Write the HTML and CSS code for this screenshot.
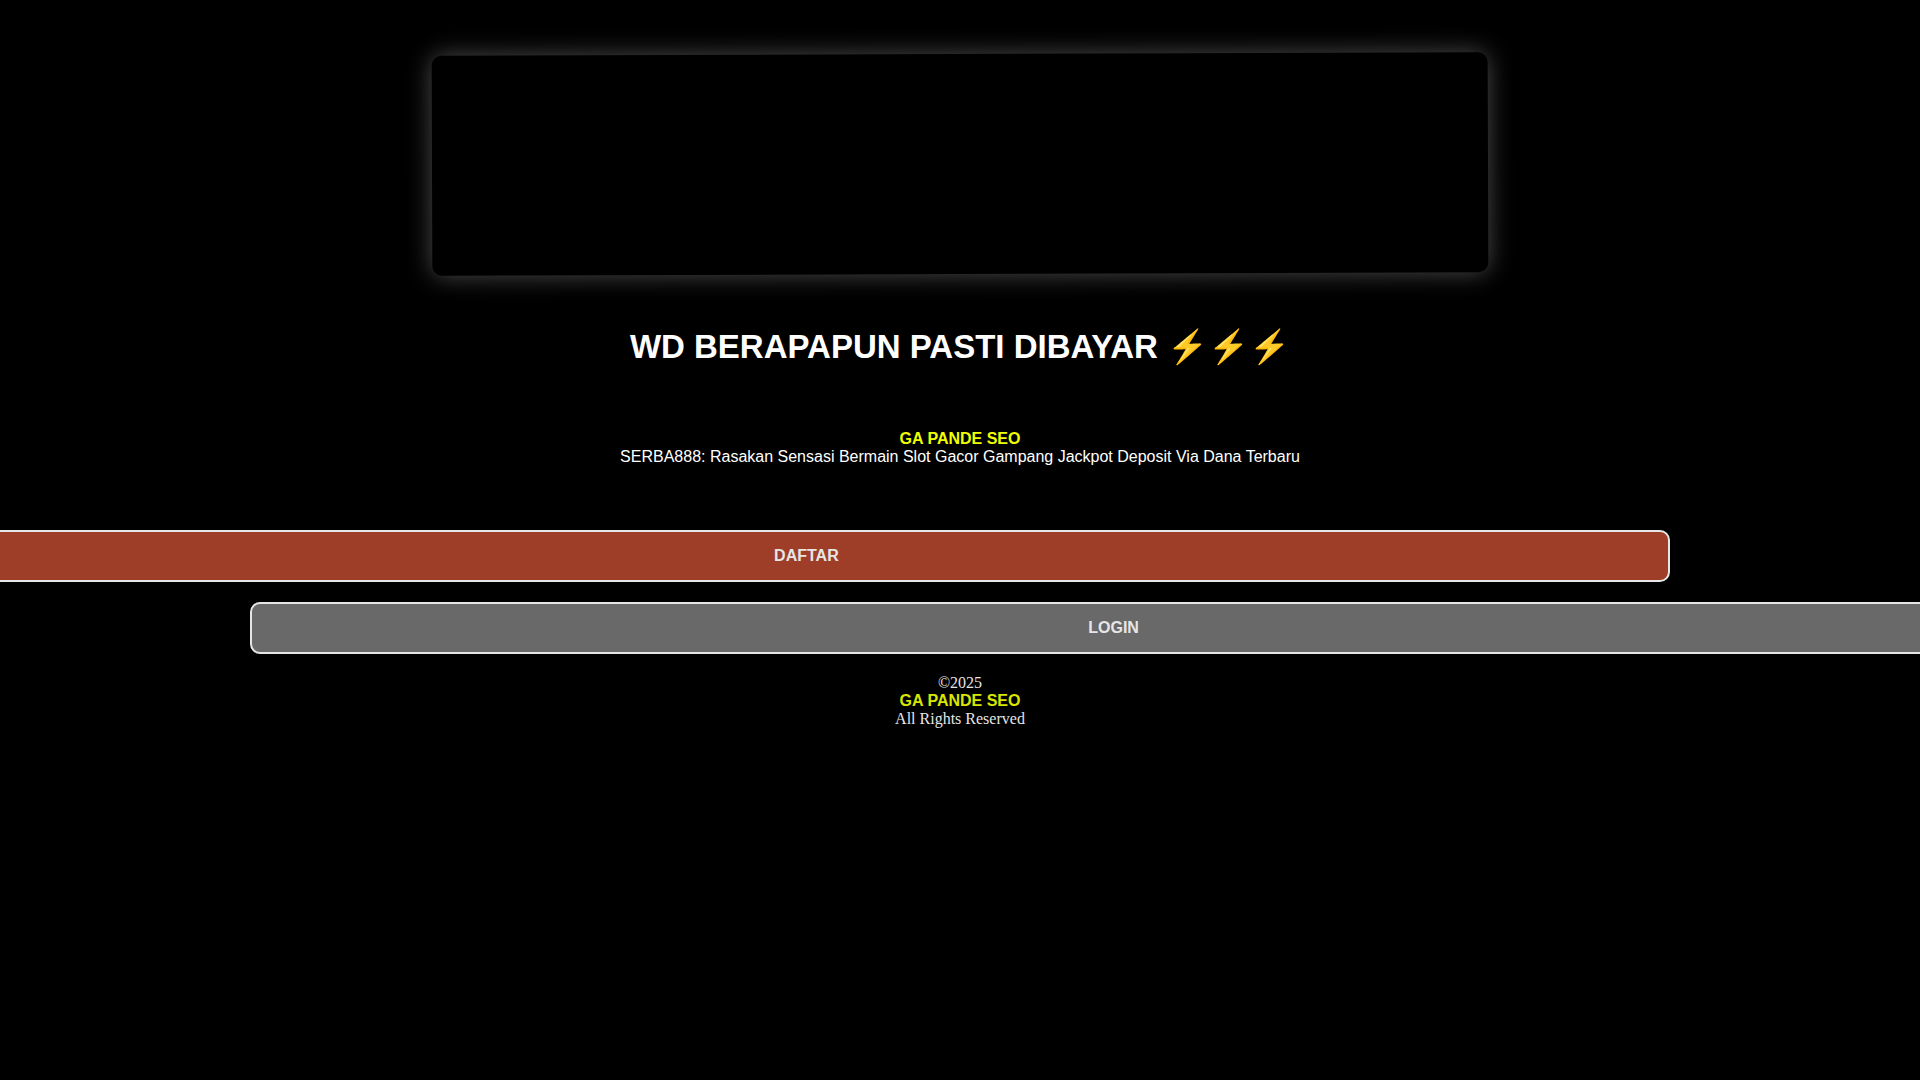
FILE: index.html
```
<!DOCTYPE html>
<html lang="id">
<head>
    <meta charset="UTF-8">
    <meta name="viewport" content="width=device-width, initial-scale=1.0">
    <title>GA PANDE SEO</title>
    <link rel="stylesheet" href="styles.css">
</head>
<body>
    <div class="banner"></div>
    <h1 class="title">WD BERAPAPUN PASTI DIBAYAR ⚡⚡⚡</h1>
    <div class="intro">
        <a class="brand" href="#">GA PANDE SEO</a>
        <p>SERBA888: Rasakan Sensasi Bermain Slot Gacor Gampang Jackpot Deposit Via Dana Terbaru</p>
    </div>
    <div class="buttons">
        <button class="btn btn-daftar" type="button">DAFTAR</button>
        <button class="btn btn-login" type="button">LOGIN</button>
    </div>
    <footer class="footer">
        <p>©2025</p>
        <a class="brand" href="#">GA PANDE SEO</a>
        <p>All Rights Reserved</p>
    </footer>
</body>
</html>
```

FILE: styles.css
```
body {
    margin: 0;
    background-color: #000;
    color: #fff;
    font-family: "Liberation Sans", Arial, sans-serif;
    font-size: 16px;
    line-height: 18px;
    text-align: center;
    overflow-x: hidden;
}
p {
    margin: 0;
}
.banner {
    width: 55%;
    height: 220px;
    margin: 54px auto 0;
    border-radius: 10px;
    box-shadow: 0 0 24px rgba(255, 255, 255, 0.3);
    background-color: #000;
    transform: rotate(-0.2deg);
}
.title {
    margin: 54px 0 64px;
    font-size: 33px;
    line-height: 38px;
}
.brand {
    display: block;
    color: #f0ff00;
    font-weight: bold;
    text-decoration: none;
}
.intro {
    margin-bottom: 64px;
}
.buttons {
    display: flex;
    flex-direction: column;
    gap: 20px;
}
.btn {
    width: 90%;
    padding: 15px;
    border: 2px solid #e6e6e6;
    border-radius: 10px;
    box-sizing: border-box;
    color: #e6e6e6;
    font: bold 16px/18px "Liberation Sans", Arial, sans-serif;
}
/* the two buttons run off opposite sides of the page */
.btn-daftar {
    margin-left: -3%;
    background-color: #9e3d28;
}
.btn-login {
    margin-left: 13%;
    background-color: #69696a;
}
.footer {
    margin-top: 20px;
    color: #e6e6e6;
    font-family: "Liberation Serif", "Times New Roman", serif;
}
.footer .brand {
    color: #d8e600;
    font-family: "Liberation Sans", Arial, sans-serif;
}
```
